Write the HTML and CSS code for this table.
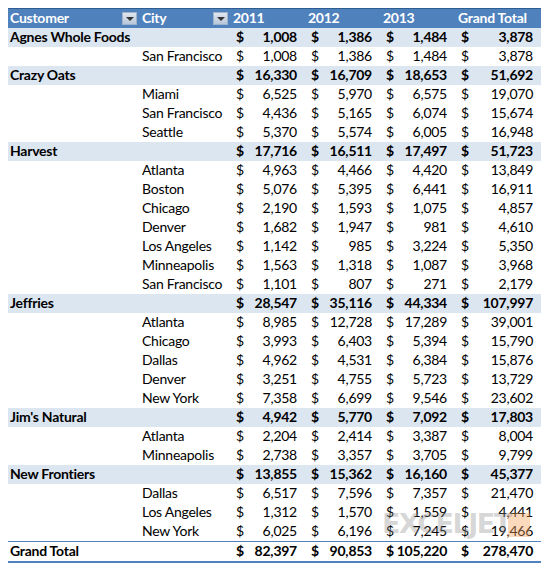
FILE: index.html
```html
<!DOCTYPE html>
<html>
<head>
<meta charset="utf-8">
<link rel="stylesheet" href="styles.css">
</head>
<body>
<div class="wrap">
<table class="pivot">
  <colgroup>
    <col class="c-cust"><col class="c-city"><col class="c-y"><col class="c-y"><col class="c-y"><col class="c-gt">
  </colgroup>
  <thead>
    <tr>
      <th><div class="hcell"><span>Customer</span><span class="dd"></span></div></th>
      <th><div class="hcell"><span>City</span><span class="dd"></span></div></th>
      <th>2011</th><th>2012</th><th>2013</th><th>Grand Total</th>
    </tr>
  </thead>
  <tbody>
    <tr class="grp"><td>Agnes Whole Foods</td><td></td><td class="amt"><span class="cur">$</span>1,008</td><td class="amt"><span class="cur">$</span>1,386</td><td class="amt"><span class="cur">$</span>1,484</td><td class="amt"><span class="cur">$</span>3,878</td></tr>
    <tr><td></td><td>San Francisco</td><td class="amt"><span class="cur">$</span>1,008</td><td class="amt"><span class="cur">$</span>1,386</td><td class="amt"><span class="cur">$</span>1,484</td><td class="amt"><span class="cur">$</span>3,878</td></tr>
    <tr class="grp"><td>Crazy Oats</td><td></td><td class="amt"><span class="cur">$</span>16,330</td><td class="amt"><span class="cur">$</span>16,709</td><td class="amt"><span class="cur">$</span>18,653</td><td class="amt"><span class="cur">$</span>51,692</td></tr>
    <tr><td></td><td>Miami</td><td class="amt"><span class="cur">$</span>6,525</td><td class="amt"><span class="cur">$</span>5,970</td><td class="amt"><span class="cur">$</span>6,575</td><td class="amt"><span class="cur">$</span>19,070</td></tr>
    <tr><td></td><td>San Francisco</td><td class="amt"><span class="cur">$</span>4,436</td><td class="amt"><span class="cur">$</span>5,165</td><td class="amt"><span class="cur">$</span>6,074</td><td class="amt"><span class="cur">$</span>15,674</td></tr>
    <tr><td></td><td>Seattle</td><td class="amt"><span class="cur">$</span>5,370</td><td class="amt"><span class="cur">$</span>5,574</td><td class="amt"><span class="cur">$</span>6,005</td><td class="amt"><span class="cur">$</span>16,948</td></tr>
    <tr class="grp"><td>Harvest</td><td></td><td class="amt"><span class="cur">$</span>17,716</td><td class="amt"><span class="cur">$</span>16,511</td><td class="amt"><span class="cur">$</span>17,497</td><td class="amt"><span class="cur">$</span>51,723</td></tr>
    <tr><td></td><td>Atlanta</td><td class="amt"><span class="cur">$</span>4,963</td><td class="amt"><span class="cur">$</span>4,466</td><td class="amt"><span class="cur">$</span>4,420</td><td class="amt"><span class="cur">$</span>13,849</td></tr>
    <tr><td></td><td>Boston</td><td class="amt"><span class="cur">$</span>5,076</td><td class="amt"><span class="cur">$</span>5,395</td><td class="amt"><span class="cur">$</span>6,441</td><td class="amt"><span class="cur">$</span>16,911</td></tr>
    <tr><td></td><td>Chicago</td><td class="amt"><span class="cur">$</span>2,190</td><td class="amt"><span class="cur">$</span>1,593</td><td class="amt"><span class="cur">$</span>1,075</td><td class="amt"><span class="cur">$</span>4,857</td></tr>
    <tr><td></td><td>Denver</td><td class="amt"><span class="cur">$</span>1,682</td><td class="amt"><span class="cur">$</span>1,947</td><td class="amt"><span class="cur">$</span>981</td><td class="amt"><span class="cur">$</span>4,610</td></tr>
    <tr><td></td><td>Los Angeles</td><td class="amt"><span class="cur">$</span>1,142</td><td class="amt"><span class="cur">$</span>985</td><td class="amt"><span class="cur">$</span>3,224</td><td class="amt"><span class="cur">$</span>5,350</td></tr>
    <tr><td></td><td>Minneapolis</td><td class="amt"><span class="cur">$</span>1,563</td><td class="amt"><span class="cur">$</span>1,318</td><td class="amt"><span class="cur">$</span>1,087</td><td class="amt"><span class="cur">$</span>3,968</td></tr>
    <tr><td></td><td>San Francisco</td><td class="amt"><span class="cur">$</span>1,101</td><td class="amt"><span class="cur">$</span>807</td><td class="amt"><span class="cur">$</span>271</td><td class="amt"><span class="cur">$</span>2,179</td></tr>
    <tr class="grp"><td>Jeffries</td><td></td><td class="amt"><span class="cur">$</span>28,547</td><td class="amt"><span class="cur">$</span>35,116</td><td class="amt"><span class="cur">$</span>44,334</td><td class="amt"><span class="cur">$</span>107,997</td></tr>
    <tr><td></td><td>Atlanta</td><td class="amt"><span class="cur">$</span>8,985</td><td class="amt"><span class="cur">$</span>12,728</td><td class="amt"><span class="cur">$</span>17,289</td><td class="amt"><span class="cur">$</span>39,001</td></tr>
    <tr><td></td><td>Chicago</td><td class="amt"><span class="cur">$</span>3,993</td><td class="amt"><span class="cur">$</span>6,403</td><td class="amt"><span class="cur">$</span>5,394</td><td class="amt"><span class="cur">$</span>15,790</td></tr>
    <tr><td></td><td>Dallas</td><td class="amt"><span class="cur">$</span>4,962</td><td class="amt"><span class="cur">$</span>4,531</td><td class="amt"><span class="cur">$</span>6,384</td><td class="amt"><span class="cur">$</span>15,876</td></tr>
    <tr><td></td><td>Denver</td><td class="amt"><span class="cur">$</span>3,251</td><td class="amt"><span class="cur">$</span>4,755</td><td class="amt"><span class="cur">$</span>5,723</td><td class="amt"><span class="cur">$</span>13,729</td></tr>
    <tr><td></td><td>New York</td><td class="amt"><span class="cur">$</span>7,358</td><td class="amt"><span class="cur">$</span>6,699</td><td class="amt"><span class="cur">$</span>9,546</td><td class="amt"><span class="cur">$</span>23,602</td></tr>
    <tr class="grp"><td>Jim's Natural</td><td></td><td class="amt"><span class="cur">$</span>4,942</td><td class="amt"><span class="cur">$</span>5,770</td><td class="amt"><span class="cur">$</span>7,092</td><td class="amt"><span class="cur">$</span>17,803</td></tr>
    <tr><td></td><td>Atlanta</td><td class="amt"><span class="cur">$</span>2,204</td><td class="amt"><span class="cur">$</span>2,414</td><td class="amt"><span class="cur">$</span>3,387</td><td class="amt"><span class="cur">$</span>8,004</td></tr>
    <tr><td></td><td>Minneapolis</td><td class="amt"><span class="cur">$</span>2,738</td><td class="amt"><span class="cur">$</span>3,357</td><td class="amt"><span class="cur">$</span>3,705</td><td class="amt"><span class="cur">$</span>9,799</td></tr>
    <tr class="grp"><td>New Frontiers</td><td></td><td class="amt"><span class="cur">$</span>13,855</td><td class="amt"><span class="cur">$</span>15,362</td><td class="amt"><span class="cur">$</span>16,160</td><td class="amt"><span class="cur">$</span>45,377</td></tr>
    <tr><td></td><td>Dallas</td><td class="amt"><span class="cur">$</span>6,517</td><td class="amt"><span class="cur">$</span>7,596</td><td class="amt"><span class="cur">$</span>7,357</td><td class="amt"><span class="cur">$</span>21,470</td></tr>
    <tr><td></td><td>Los Angeles</td><td class="amt"><span class="cur">$</span>1,312</td><td class="amt"><span class="cur">$</span>1,570</td><td class="amt"><span class="cur">$</span>1,559</td><td class="amt"><span class="cur">$</span>4,441</td></tr>
    <tr><td></td><td>New York</td><td class="amt"><span class="cur">$</span>6,025</td><td class="amt"><span class="cur">$</span>6,196</td><td class="amt"><span class="cur">$</span>7,245</td><td class="amt"><span class="cur">$</span>19,466</td></tr>
  </tbody>
  <tfoot>
    <tr class="total"><td>Grand Total</td><td></td><td class="amt"><span class="cur">$</span>82,397</td><td class="amt"><span class="cur">$</span>90,853</td><td class="amt"><span class="cur">$</span>105,220</td><td class="amt"><span class="cur">$</span>278,470</td></tr>
  </tfoot>
</table>
<div class="watermark" aria-hidden="true"><span class="wm-box"></span><span class="wm-text">EXCELJET</span></div>
</div>
</body>
</html>
```

FILE: styles.css
```css
html, body { margin: 0; padding: 0; background: #fff; }
body { padding: 8px 0 0 8px; }
.wrap { position: relative; width: 533px; }
.pivot {
  border-collapse: collapse;
  table-layout: fixed;
  width: 533px;
  font-family: Lato, "Open Sans", sans-serif;
  font-size: 14px;
  letter-spacing: -0.25px;
  color: #000;
}
.c-cust { width: 131px; }
.c-city { width: 91px; }
.c-y { width: 75px; }
.c-gt { width: 86px; }
.pivot th {
  background: #4f81bd;
  color: #fff;
  font-weight: 700;
  text-align: left;
  height: 17px;
  padding: 0 0 2px 3px;
  border-top: 1px solid #2e5d92;
  line-height: 17px;
  white-space: nowrap;
}
.pivot th:first-child { padding-left: 2px; }
.hcell { display: flex; align-items: center; justify-content: space-between; padding-right: 2px; }
.dd {
  position: relative;
  width: 15px; height: 13px;
  margin-top: 2px;
  background: linear-gradient(#dfe6ef, #b8c7da);
  box-sizing: border-box;
  border: 1px solid #9fb3cc;
}
.dd::after {
  content: "";
  position: absolute;
  left: 3px; top: 4px;
  border-left: 4px solid transparent;
  border-right: 4px solid transparent;
  border-top: 4px solid #333;
}
.pivot td {
  height: 17px;
  line-height: 17px;
  padding: 0 0 2px 3px;
  white-space: nowrap;
  overflow: hidden;
}
.pivot td:first-child { padding-left: 2px; }
.pivot td.amt { text-align: right; padding: 0 8px 2px 6px; }
.cur { float: left; }
.grp td { background: #dce6f1; font-weight: 700; }
.total td {
  font-weight: 700;
  border-top: 1px solid #4f81bd;
  border-bottom: 2px solid #4f81bd;
  height: 16px;
}
.watermark {
  position: absolute;
  left: 374px;
  top: 498px;
  width: 150px;
  height: 36px;
  pointer-events: none;
}
.wm-box {
  position: absolute;
  left: 126px; top: 7px;
  width: 22px; height: 24px;
  background: rgba(244, 160, 90, 0.4);
}
.wm-text {
  position: absolute;
  left: 0; top: 0;
  font-family: "DejaVu Sans", sans-serif;
  font-weight: 700;
  font-size: 27px;
  line-height: 36px;
  letter-spacing: -1.5px;
  color: rgba(140, 140, 140, 0.35);
}
```
